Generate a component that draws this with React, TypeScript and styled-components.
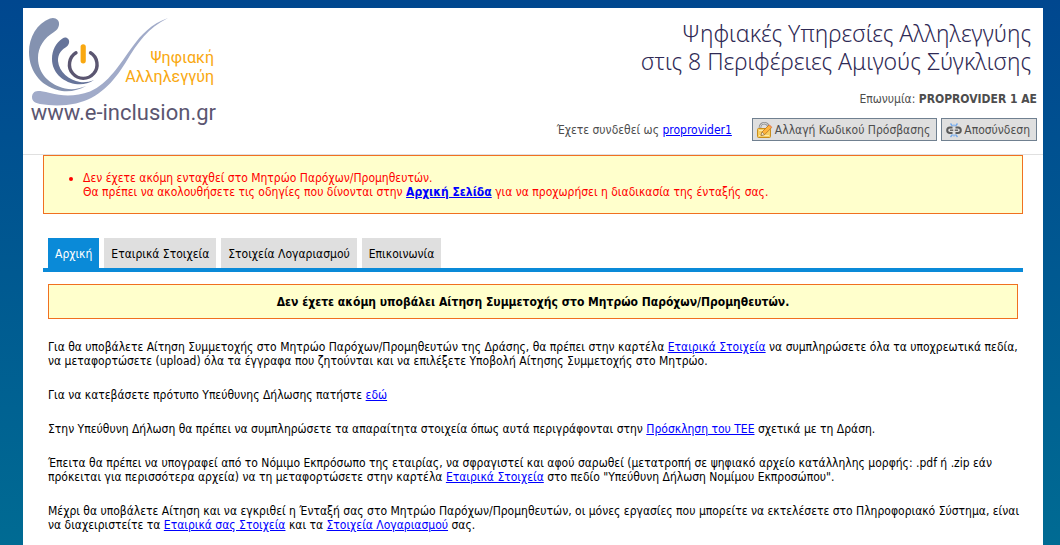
import React from "react";
import styled, { createGlobalStyle } from "styled-components";

const Global = createGlobalStyle`
  * { box-sizing: border-box; }
  html { min-height: 100%; background: linear-gradient(#00478f, #006b93); }
  body { margin: 0; font: 12px/14px "DejaVu Sans Condensed", "Noto Sans", sans-serif; color: #000; }
  a { color: #00f; }
`;

const Page = styled.div`
  min-height: calc(100vh - 8px);
  margin: 8px 17px 0 23px;
  background: #fff;
`;

const Header = styled.header`
  display: flex;
  justify-content: space-between;
  min-height: 147px;
  padding: 0 6px;
  border-bottom: 1px solid #e0e0e0;
`;

const Logo = styled.svg`
  display: block;
  flex: none;
  margin-top: 4px;
`;

const LogoText = styled.text<{ $size: number; $fill: string }>`
  font-family: Roboto, sans-serif;
  font-size: ${(p) => p.$size}px;
  fill: ${(p) => p.$fill};
  text-anchor: end;
`;

const HeaderSide = styled.div`
  display: flex;
  flex-direction: column;
  align-items: flex-end;
  color: #4d4d4d;
`;

const Title = styled.h1`
  margin: 11px 6px 0 0;
  font: 300 23px/28px "Noto Sans", sans-serif;
  color: #2f2a55;
  text-align: right;
`;

const Company = styled.p`
  margin: 17px 0 0;
`;

const Session = styled.div`
  display: flex;
  align-items: center;
  gap: 4px;
  margin-top: 12px;
`;

const SessionText = styled.span`
  margin-right: 16px;
`;

const ToolButton = styled.button`
  display: flex;
  align-items: center;
  gap: 2px;
  height: 23px;
  padding: 0 6px 0 4px;
  border: 1px solid #708090;
  background: #dfdfdf;
  color: #4d4d4d;
  font: inherit;
  white-space: nowrap;
`;

const Main = styled.main`
  padding: 0 20px;
`;

const Alert = styled.ul`
  margin: 0;
  padding: 15px 39px 14px;
  border: 1px solid #f07020;
  background: #ffc;
  color: #f00;
`;

const Tabs = styled.nav`
  display: flex;
  gap: 5px;
  margin-top: 24px;
  padding: 0 5px;
  border-bottom: 4px solid #0a8ad8;
`;

const Tab = styled.a<{ $active?: boolean }>`
  padding: 9px 7px 7px;
  background: ${(p) => (p.$active ? "#0a8ad8" : "#dfdfdf")};
  color: ${(p) => (p.$active ? "#fff" : "#000")};
  text-decoration: none;
`;

const Content = styled.section`
  padding: 12px 0 0 5px;
`;

const Notice = styled.p`
  margin: 0 5px 21px 0;
  padding: 10px 8px 9px;
  border: 1px solid #f07020;
  background: #ffc;
  font-weight: bold;
  text-align: center;
`;

const Paragraph = styled.p`
  margin: 0 0 20px;

  &:last-child {
    margin-bottom: 0;
  }
`;

function BrandLogo() {
  return (
    <Logo width="190" height="118" viewBox="29 12 190 118" role="img" aria-label="Ψηφιακή Αλληλεγγύη">
      <path
        fill="#8492b0"
        d="M50 18.500C55 16.500 60 20 59 25C58.500 28 57 30 54 32C44 38 38 47 38 58C38 74 50 85 65 88.500C72 90 79 89 86 86C79 90 71 92 62 91C43 88 29 73 29 52C29 37 37 23.500 50 18.500Z"
      />
      <path
        fill="#66749a"
        d="M62.500 38.500C66 36 70 39 69 43C68.500 45 67.500 46 65.500 47.500C60 51 58 55 58 61C59 72 69 80 80 82C85 82.500 89 82 94 80C88 84 82 85 75 84C62 81.500 52 72 52 59C52 50 56 43 62.500 38.500Z"
      />
      <path
        fill="#a1abc9"
        d="M168 18C151 24 141 35 133 46C119 65 109 83 90 91.500C76 96.500 63 96.500 50 93C44 91.500 41 91 38 91C34 91 32 94 32 97C32 101 35 103 40 104C52 106 64 106 76 103.500C99 98 113 83 126 62C138 42 148 28 168 18Z"
      />
      <path
        fill="none"
        stroke="#5b5671"
        strokeWidth="3.400"
        strokeLinecap="round"
        d="M76 52.800A13.800 13.800 0 1 0 90.500 52.800"
      />
      <path stroke="#f9a810" strokeWidth="5.200" strokeLinecap="round" d="M83.200 46.800V60.800" />
      <LogoText $size={16} $fill="#f9a810" x="214" y="63">Ψηφιακή</LogoText>
      <LogoText $size={16} $fill="#f9a810" x="214" y="82">Αλληλεγγύη</LogoText>
      <LogoText $size={22} $fill="#5b5671" x="216" y="120">www.e-inclusion.gr</LogoText>
    </Logo>
  );
}

function LockEditIcon() {
  return (
    <svg width="16" height="16" viewBox="0 0 16 16" aria-hidden="true">
      <path d="M3 7.500V5.500a4.300 4.300 0 0 1 8.600 0V7.500" fill="none" stroke="#8f8f8f" strokeWidth="2.600" />
      <path d="M3 7.500V5.500a4.300 4.300 0 0 1 8.600 0V7.500" fill="none" stroke="#dcdcdc" strokeWidth="1" />
      <rect x=".5" y="6.500" width="13" height="9" rx="1" fill="#f8cf62" stroke="#c98d1c" />
      <path d="M2 8.500h10M2 13.500h10" stroke="#ffe9a8" />
      <path d="M4 13.500l1-3.500 7-7 2.600 2.600-7 7z" fill="#ffb43c" stroke="#b8741a" strokeWidth=".8" />
      <path d="M5 10l2.600 2.600L4 13.500z" fill="#fff3d6" stroke="#8a6a3a" strokeWidth=".6" />
      <path d="M11.600 3.400l1-1 2.600 2.600-1 1z" fill="#e88a5a" />
    </svg>
  );
}

function BrokenLinkIcon() {
  return (
    <svg width="16" height="16" viewBox="0 0 16 16" fill="none" aria-hidden="true">
      <path d="M6.500 5.500H4a2.800 2.800 0 0 0 0 5.600h2.500M9.500 5.500H12a2.800 2.800 0 0 1 0 5.600H9.500" stroke="#5c5c5c" strokeWidth="2" />
      <path d="M4 8.300h3.200M8.800 8.300H12" stroke="#6d6d6d" strokeWidth="1.600" />
      <path d="M8 2.500v2M4.500 1.500l2 2.500M11.500 1.500l-2 2.500M8 12.500v2M4.500 15l2-2.500M11.500 15l-2-2.500" stroke="#6fa8ee" strokeWidth="1.300" />
    </svg>
  );
}

export default function App() {
  return (
    <>
      <Global />
      <Page lang="el">
        <Header>
          <BrandLogo />
          <HeaderSide>
            <Title>
              Ψηφιακές Υπηρεσίες Αλληλεγγύης
              <br />
              στις 8 Περιφέρειες Αμιγούς Σύγκλισης
            </Title>
            <Company>
              Επωνυμία: <b>PROPROVIDER 1 ΑΕ</b>
            </Company>
            <Session>
              <SessionText>
                Έχετε συνδεθεί ως <a href="#profile">proprovider1</a>
              </SessionText>
              <ToolButton type="button">
                <LockEditIcon />
                Αλλαγή Κωδικού Πρόσβασης
              </ToolButton>
              <ToolButton type="button">
                <BrokenLinkIcon />
                Αποσύνδεση
              </ToolButton>
            </Session>
          </HeaderSide>
        </Header>
        <Main>
          <Alert>
            <li>
              Δεν έχετε ακόμη ενταχθεί στο Μητρώο Παρόχων/Προμηθευτών.
              <br />
              Θα πρέπει να ακολουθήσετε τις οδηγίες που δίνονται στην{" "}
              <a href="#home"><b>Αρχική Σελίδα</b></a> για να προχωρήσει η διαδικασία της ένταξής σας.
            </li>
          </Alert>
          <Tabs>
            <Tab href="#home" $active>Αρχική</Tab>
            <Tab href="#company">Εταιρικά Στοιχεία</Tab>
            <Tab href="#account">Στοιχεία Λογαριασμού</Tab>
            <Tab href="#contact">Επικοινωνία</Tab>
          </Tabs>
          <Content>
            <Notice>Δεν έχετε ακόμη υποβάλει Αίτηση Συμμετοχής στο Μητρώο Παρόχων/Προμηθευτών.</Notice>
            <Paragraph>
              Για θα υποβάλετε Αίτηση Συμμετοχής στο Μητρώο Παρόχων/Προμηθευτών της Δράσης, θα πρέπει στην καρτέλα{" "}
              <a href="#company">Εταιρικά Στοιχεία</a> να συμπληρώσετε όλα τα υποχρεωτικά πεδία, να μεταφορτώσετε
              (upload) όλα τα έγγραφα που ζητούνται και να επιλέξετε Υποβολή Αίτησης Συμμετοχής στο Μητρώο.
            </Paragraph>
            <Paragraph>
              Για να κατεβάσετε πρότυπο Υπεύθυνης Δήλωσης πατήστε <a href="#template">εδώ</a>
            </Paragraph>
            <Paragraph>
              Στην Υπεύθυνη Δήλωση θα πρέπει να συμπληρώσετε τα απαραίτητα στοιχεία όπως αυτά περιγράφονται στην{" "}
              <a href="#call">Πρόσκληση του ΤΕΕ</a> σχετικά με τη Δράση.
            </Paragraph>
            <Paragraph>
              Έπειτα θα πρέπει να υπογραφεί από το Νόμιμο Εκπρόσωπο της εταιρίας, να σφραγιστεί και αφού σαρωθεί
              (μετατροπή σε ψηφιακό αρχείο κατάλληλης μορφής: .pdf ή .zip εάν πρόκειται για περισσότερα αρχεία) να τη
              μεταφορτώσετε στην καρτέλα <a href="#company">Εταιρικά Στοιχεία</a> στο πεδίο "Υπεύθυνη Δήλωση Νομίμου
              Εκπροσώπου".
            </Paragraph>
            <Paragraph>
              Μέχρι θα υποβάλετε Αίτηση και να εγκριθεί η Ένταξή σας στο Μητρώο Παρόχων/Προμηθευτών, οι μόνες εργασίες
              που μπορείτε να εκτελέσετε στο Πληροφοριακό Σύστημα, είναι να διαχειριστείτε τα{" "}
              <a href="#company">Εταιρικά σας Στοιχεία</a> και τα <a href="#account">Στοιχεία Λογαριασμού</a> σας.
            </Paragraph>
          </Content>
        </Main>
      </Page>
    </>
  );
}
